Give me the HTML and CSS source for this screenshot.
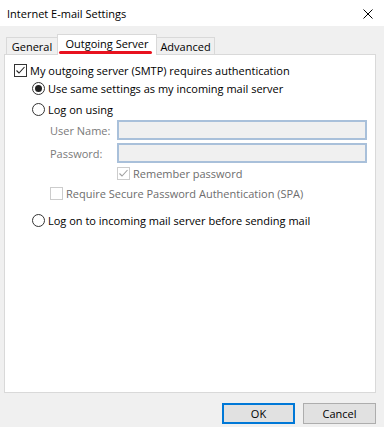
FILE: index.html
```html
<!DOCTYPE html>
<html>
<head>
<meta charset="utf-8">
<link rel="stylesheet" href="styles.css">
</head>
<body>
<div class="window">
  <div class="titlebar">
    <span class="title">Internet E-mail Settings</span>
    <svg class="close" width="10" height="10" viewBox="0 0 10 10"><path d="M0.5 0.5 L9.5 9.5 M9.5 0.5 L0.5 9.5" stroke="#000" stroke-width="1" fill="none"/></svg>
  </div>
  <div class="tabs">
    <div class="tab">General</div>
    <div class="tab active">Outgoing Server<span class="underline"></span></div>
    <div class="tab">Advanced</div>
  </div>
  <div class="panel">
    <div class="row r1">
      <span class="cb"><svg width="11" height="11" viewBox="0 0 11 11"><path d="M1.5 5.5 L4 8 L9.5 2" stroke="#222" stroke-width="1.1" fill="none"/></svg></span>
      <span class="lbl">My outgoing server (SMTP) requires authentication</span>
    </div>
    <div class="row r2 ind1">
      <span class="rb on"></span>
      <span class="lbl">Use same settings as my incoming mail server</span>
    </div>
    <div class="row r3 ind1">
      <span class="rb"></span>
      <span class="lbl">Log on using</span>
    </div>
    <div class="field f1">
      <span class="flbl">User Name:</span>
      <span class="input"></span>
    </div>
    <div class="field f2">
      <span class="flbl">Password:</span>
      <span class="input"></span>
    </div>
    <div class="row r4 ind3">
      <span class="cb dis"><svg width="11" height="11" viewBox="0 0 11 11"><path d="M1.5 5.5 L4 8 L9.5 2" stroke="#a0a0a0" stroke-width="1.1" fill="none"/></svg></span>
      <span class="lbl dim">Remember password</span>
    </div>
    <div class="row r5 ind2">
      <span class="cb dis"></span>
      <span class="lbl dim">Require Secure Password Authentication (SPA)</span>
    </div>
    <div class="row r6 ind1">
      <span class="rb"></span>
      <span class="lbl">Log on to incoming mail server before sending mail</span>
    </div>
  </div>
  <div class="footer">
    <button class="btn default">OK</button>
    <button class="btn">Cancel</button>
  </div>
</div>
</body>
</html>
```

FILE: styles.css
```css
* { box-sizing: border-box; }
html, body { margin: 0; padding: 0; }
body {
  width: 384px;
  height: 427px;
  background: #f0f0f0;
  font-family: "Open Sans", "Noto Sans", sans-serif;
  font-size: 11px;
  color: #000;
  overflow: hidden;
}
.titlebar {
  height: 26px;
  background: #fff;
  display: flex;
  align-items: center;
  justify-content: space-between;
  padding: 0 11px 0 7px;
}
.title { font-size: 11px; }
.close { display: block; margin-top: 1px; }
.tabs {
  display: flex;
  align-items: flex-end;
  margin-top: 8px;
  padding-left: 6px;
  height: 20px;
  position: relative;
  z-index: 1;
}
.tab {
  height: 17px;
  border: 1px solid #d9d9d9;
  border-bottom: none;
  background: #f0f0f0;
  line-height: 17px;
  text-align: center;
  white-space: nowrap;
  position: relative;
}
.tab:first-child { width: 51px; border-right: none; }
.tab:last-child { width: 58px; border-left: none; }
.tab.active {
  height: 21px;
  margin-bottom: -1px;
  background: #fff;
  width: 100px;
  line-height: 18px;
}
.underline {
  position: absolute;
  left: 1px;
  bottom: 1px;
  width: 93px;
  height: 3px;
  border-radius: 2px;
  background: #e8121f;
}
.panel {
  margin: 0 8px 0 4px;
  height: 339px;
  background: #fff;
  border: 1px solid #d9d9d9;
  padding: 7px 8px 0 9px;
}
.row {
  display: flex;
  align-items: center;
  height: 17px;
  white-space: nowrap;
}
.r2 { margin-top: 1px; }
.r3 { margin-top: 4px; }
.r4 { margin-top: 2px; }
.r5 { margin-top: 3px; }
.r6 { margin-top: 10px; }
.ind1 { padding-left: 18px; }
.ind2 { padding-left: 36px; }
.ind3 { padding-left: 103px; }
.cb {
  width: 13px;
  height: 13px;
  border: 1px solid #333;
  background: #fff;
  display: flex;
  align-items: center;
  justify-content: center;
  flex: none;
}
.cb.dis { border-color: #cccccc; }
.rb {
  width: 13px;
  height: 13px;
  border: 1px solid #333;
  border-radius: 50%;
  background: #fff;
  flex: none;
  display: flex;
  align-items: center;
  justify-content: center;
}
.rb.on::after {
  content: "";
  width: 7px;
  height: 7px;
  border-radius: 50%;
  background: #222;
}
.lbl { margin-left: 3px; }
.dim { color: #6d6d6d; }
.field {
  display: flex;
  align-items: center;
  height: 20px;
  padding-left: 36px;
}
.f1 { margin-top: 2px; }
.f2 { margin-top: 3px; }
.flbl {
  width: 67px;
  color: #7a7a7a;
  flex: none;
}
.input {
  flex: 1;
  height: 20px;
  background: #f0f0f0;
  border: 2px solid #a9c0da;
}
.footer {
  display: flex;
  justify-content: flex-end;
  gap: 8px;
  padding-right: 8px;
  margin-top: 10px;
}
.btn {
  width: 73px;
  height: 21px;
  margin: 0;
  padding: 0;
  background: #e1e1e1;
  border: 1px solid #adadad;
  font-family: inherit;
  font-size: 11px;
  color: #000;
  line-height: 17px;
}
.btn.default { border: 2px solid #0078d7; }
```
